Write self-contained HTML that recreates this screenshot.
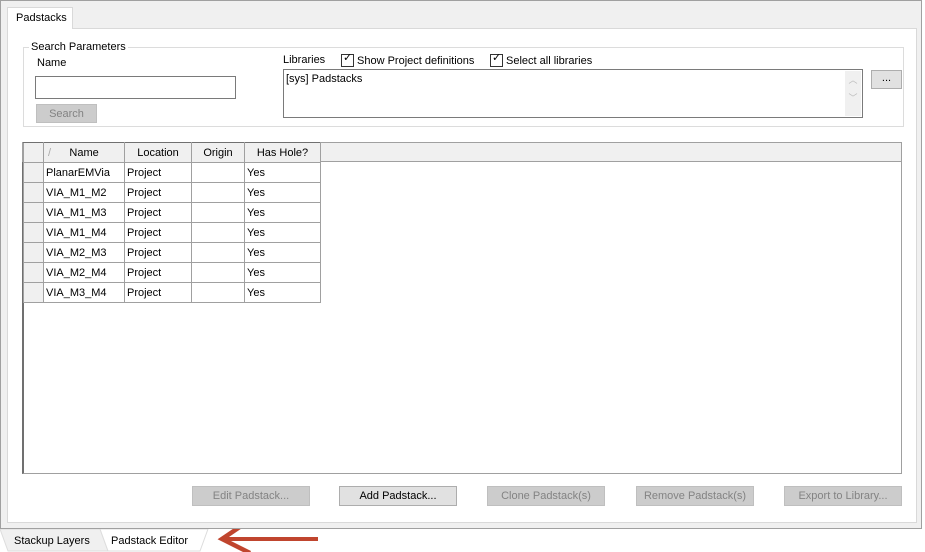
<!DOCTYPE html>
<html><head><style>
*{box-sizing:border-box;margin:0;padding:0}
body{width:925px;height:552px;background:#fff;font-family:"Liberation Sans",sans-serif;font-size:11px;color:#000;position:relative;overflow:hidden}
.a{position:absolute}
.btn{position:absolute;height:20px;border:1px solid #adadad;background:#e1e1e1;text-align:center;line-height:18px;font-size:11px}
.dis{background:#cccccc;border-color:#bfbfbf;color:#838383}
.cb{position:absolute;width:13px;height:13px;border:1px solid #333;background:#fff}
table{border-collapse:collapse;position:absolute;left:23px;top:142px}
td{border:1px solid #a0a0a0;height:20px;padding:0 2px;font-size:11px;white-space:nowrap}
.h td{background:#f0f0f0;text-align:center;border-color:#707070 #a0a0a0 #a0a0a0 #a0a0a0}
td.rh{background:#f0f0f0;width:20px}
</style></head><body>
<div class="a" style="left:0;top:0;width:922px;height:529px;background:#f0f0f0;border:1px solid #a0a0a0"></div>
<div class="a" style="left:7px;top:28px;width:910px;height:495px;background:#fff;border:1px solid #d9d9d9"></div>
<div class="a" style="left:7px;top:7px;width:66px;height:22px;background:#fff;border:1px solid #d9d9d9;border-bottom:none;padding:4px 0 0 8px">Padstacks</div>
<div class="a" style="left:23px;top:47px;width:881px;height:80px;border:1px solid #dcdcdc"></div>
<div class="a" style="left:29px;top:41px;background:#fff;padding:0 2px">Search Parameters</div>
<div class="a" style="left:37px;top:57px">Name</div>
<div class="a" style="left:35px;top:76px;width:201px;height:23px;border:1px solid #7a7a7a;background:#fff"></div>
<div class="btn dis" style="left:36px;top:104px;width:61px;height:19px">Search</div>
<div class="a" style="left:283px;top:54px">Libraries</div>
<div class="cb" style="left:341px;top:54px"></div><div class="a" style="left:343px;top:51px;font-size:11px">✓</div>
<div class="a" style="left:357px;top:55px">Show Project definitions</div>
<div class="cb" style="left:490px;top:54px"></div><div class="a" style="left:492px;top:51px;font-size:11px">✓</div>
<div class="a" style="left:506px;top:55px">Select all libraries</div>
<div class="a" style="left:283px;top:69px;width:580px;height:49px;border:1px solid #7a7a7a;background:#fff;padding:3px 2px">[sys] Padstacks</div>
<div class="a" style="left:845px;top:71px;width:16px;height:45px;background:#f0f0f0;color:#bbb;font-size:9px;text-align:center;line-height:18px">︿<br>﹀</div>
<div class="btn" style="left:871px;top:70px;width:31px;height:19px;line-height:14px">...</div>
<div class="a" style="left:22px;top:142px;width:880px;height:332px;border:1px solid #a0a0a0;border-left:2px solid #707070;background:#fff"></div>
<div class="a" style="left:22px;top:142px;width:880px;height:20px;background:#f0f0f0;border:1px solid #a0a0a0"></div>
<table>
<tr class="h"><td class="rh"></td><td style="width:81px;text-align:left;padding-left:4px"><span style="color:#aaa">/&nbsp;</span>&nbsp;&nbsp;&nbsp;&nbsp;&nbsp;Name</td><td style="width:67px">Location</td><td style="width:53px">Origin</td><td style="width:76px">Has Hole?</td></tr>
<tr><td class="rh"></td><td>PlanarEMVia</td><td>Project</td><td></td><td>Yes</td></tr>
<tr><td class="rh"></td><td>VIA_M1_M2</td><td>Project</td><td></td><td>Yes</td></tr>
<tr><td class="rh"></td><td>VIA_M1_M3</td><td>Project</td><td></td><td>Yes</td></tr>
<tr><td class="rh"></td><td>VIA_M1_M4</td><td>Project</td><td></td><td>Yes</td></tr>
<tr><td class="rh"></td><td>VIA_M2_M3</td><td>Project</td><td></td><td>Yes</td></tr>
<tr><td class="rh"></td><td>VIA_M2_M4</td><td>Project</td><td></td><td>Yes</td></tr>
<tr><td class="rh"></td><td>VIA_M3_M4</td><td>Project</td><td></td><td>Yes</td></tr>
</table>
<div class="btn dis" style="left:192px;top:486px;width:118px">Edit Padstack...</div>
<div class="btn" style="left:339px;top:486px;width:118px">Add Padstack...</div>
<div class="btn dis" style="left:487px;top:486px;width:118px">Clone Padstack(s)</div>
<div class="btn dis" style="left:636px;top:486px;width:118px">Remove Padstack(s)</div>
<div class="btn dis" style="left:784px;top:486px;width:118px">Export to Library...</div>
<svg class="a" style="left:0;top:529px" width="925" height="23">
<path d="M0 0 L100 0 L108 22 L8 22 Z" fill="#f0f0f0" stroke="#ddd"/>
<path d="M100 0 L208 0 L200 22 L108 22 Z" fill="#fff" stroke="#ddd"/>
<text x="14" y="15" font-family="Liberation Sans" font-size="11">Stackup Layers</text>
<text x="111" y="15" font-family="Liberation Sans" font-size="11">Padstack Editor</text>
<path d="M222 10 L318 10" stroke="#c0452e" stroke-width="4"/>
<path d="M250 -9 L222 10 L250 24" fill="none" stroke="#c0452e" stroke-width="4.5"/>
</svg>
</body></html>
